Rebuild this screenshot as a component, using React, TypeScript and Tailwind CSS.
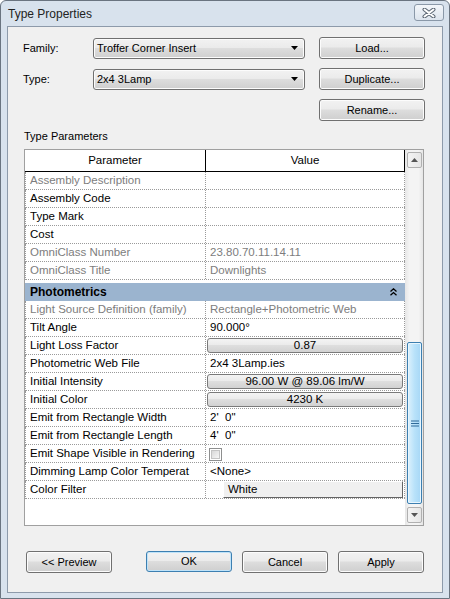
import React from "react";

const BTN =
  "border border-[#707070] rounded-[3px] bg-[linear-gradient(to_bottom,#f2f2f2_0%,#ebebeb_45%,#dddddd_50%,#cfcfcf_100%)] shadow-[inset_0_0_0_1px_#fcfcfc]";

function Combo({ text }: { text: string }) {
  return (
    <div className={`${BTN} w-[212px] h-[21px] flex items-center justify-between pl-[3px] pr-[6px]`}>
      <span className="leading-[14px]">{text}</span>
      <svg width="7" height="4" viewBox="0 0 7 4">
        <polygon points="0,0 7,0 3.5,4" fill="#000" />
      </svg>
    </div>
  );
}

function DlgButton({ text, w = "w-[106px]", primary = false }: { text: string; w?: string; primary?: boolean }) {
  return (
    <div
      className={
        primary
          ? `${w} h-[21px] flex items-center justify-center rounded-[3px] border border-[#3c7fb1] bg-[linear-gradient(to_bottom,#f2f2f2_0%,#ebebeb_45%,#dddddd_50%,#cfcfcf_100%)] shadow-[inset_0_0_0_1px_#bfe3f9]`
          : `${BTN} ${w} h-[22px] flex items-center justify-center`
      }
    >
      {text}
    </div>
  );
}

type Row = {
  p: string;
  v?: string;
  gray?: boolean;
  kind?: "text" | "button" | "check" | "color";
};

const topRows: Row[] = [
  { p: "Assembly Description", gray: true },
  { p: "Assembly Code" },
  { p: "Type Mark" },
  { p: "Cost" },
  { p: "OmniClass Number", v: "23.80.70.11.14.11", gray: true },
  { p: "OmniClass Title", v: "Downlights", gray: true },
];

const photoRows: Row[] = [
  { p: "Light Source Definition (family)", v: "Rectangle+Photometric Web", gray: true },
  { p: "Tilt Angle", v: "90.000°" },
  { p: "Light Loss Factor", v: "0.87", kind: "button" },
  { p: "Photometric Web File", v: "2x4 3Lamp.ies" },
  { p: "Initial Intensity", v: "96.00 W @ 89.06 lm/W", kind: "button" },
  { p: "Initial Color", v: "4230 K", kind: "button" },
  { p: "Emit from Rectangle Width", v: "2'\u00a0 0\"" },
  { p: "Emit from Rectangle Length", v: "4'\u00a0 0\"" },
  { p: "Emit Shape Visible in Rendering", kind: "check" },
  { p: "Dimming Lamp Color Temperat", v: "<None>" },
  { p: "Color Filter", v: "White", kind: "color" },
];

function GridRow({ r }: { r: Row }) {
  const color = r.gray ? "text-[#7d7d7d]" : "text-black";
  let value: React.ReactNode = null;
  if (r.kind === "button") {
    value = (
      <div className="w-full pl-[1px] pr-[1px] pt-[1px]">
        <div className="h-[15px] rounded-[3px] border border-[#7a7a7a] bg-[linear-gradient(to_bottom,#f4f4f4_0%,#ebebeb_45%,#dedede_50%,#d2d2d2_100%)] text-center leading-[13px] text-black">
          {r.v}
        </div>
      </div>
    );
  } else if (r.kind === "check") {
    value = (
      <div className="pl-[3px] pt-[3px]">
        <div className="w-[13px] h-[13px] border border-[#8e8f8f] bg-white p-[1px]">
          <div className="w-full h-full bg-[linear-gradient(135deg,#d8d8d8,#f6f6f6)] border border-[#c4c4c4]" />
        </div>
      </div>
    );
  } else if (r.kind === "color") {
    value = (
      <div className="flex w-full h-full pr-[1px]">
        <div className="w-[17px] h-full bg-white" />
        <div className="flex-1 h-full bg-[#f0f0f0] border-t border-l border-t-white border-l-white border-r border-b border-r-[#646464] border-b-[#646464] pl-[4px] leading-[15px] text-black">
          {r.v}
        </div>
      </div>
    );
  } else {
    value = <div className={`pl-[4px] leading-[17px] whitespace-nowrap ${color}`}>{r.v}</div>;
  }
  return (
    <div className="h-[18px] flex border-b border-l border-dotted border-[#9a9a9a]">
      <div
        className={`w-[180px] shrink-0 border-r border-dotted border-[#9a9a9a] pl-[4px] leading-[17px] whitespace-nowrap overflow-hidden ${color}`}
      >
        {r.p}
      </div>
      <div className="w-[199px] shrink-0 border-r border-dotted border-[#9a9a9a] flex">{value}</div>
    </div>
  );
}

function ScrollBtn({ up }: { up: boolean }) {
  return (
    <div className="h-[16px] w-[15px] rounded-[2px] border border-[#b0b0b0] bg-[linear-gradient(to_right,#f4f4f4,#e6e6e6)] flex items-center justify-center">
      <svg width="7" height="4" viewBox="0 0 7 4">
        {up ? (
          <polygon points="0,4 7,4 3.5,0" fill="#555" />
        ) : (
          <polygon points="0,0 7,0 3.5,4" fill="#555" />
        )}
      </svg>
    </div>
  );
}

export default function App() {
  return (
    <div className="w-[450px] h-[599px] bg-[#d8e2ed] border border-[#6a7480] rounded-t-[6px] flex flex-col overflow-hidden font-['Liberation_Sans',Arial,sans-serif] text-black">
      {/* title bar */}
      <div className="h-[25px] shrink-0 flex items-start justify-between pl-[7px] pr-[5px]">
        <div className="pt-[6px] text-[12px] leading-[14px] text-[#222]">Type Properties</div>
        <div className="mt-[3px] w-[30px] h-[17px] rounded-[3px] border border-[#8a98a8] bg-[linear-gradient(to_bottom,#f3f6fa,#dce4ed)] flex items-center justify-center">
          <svg width="14" height="10" viewBox="0 0 14 10">
            <path d="M2.5 1.5 L11.5 8.5 M11.5 1.5 L2.5 8.5" stroke="#5d6875" strokeWidth="4" strokeLinecap="round" />
            <path d="M2.5 1.5 L11.5 8.5 M11.5 1.5 L2.5 8.5" stroke="#ffffff" strokeWidth="2" strokeLinecap="round" />
          </svg>
        </div>
      </div>

      {/* client */}
      <div className="mx-[6px] mb-[5px] flex-1 border border-[#8d9aaa] bg-[#f0f0f0] flex flex-col text-[11px]">
        <div className="mt-[10px] h-[22px] flex items-center pl-[15px]">
          <div className="w-[70px]">Family:</div>
          <Combo text="Troffer Corner Insert" />
          <div className="ml-[14px]">
            <DlgButton text="Load..." />
          </div>
        </div>
        <div className="mt-[9px] h-[22px] flex items-center pl-[15px]">
          <div className="w-[70px]">Type:</div>
          <Combo text="2x4 3Lamp" />
          <div className="ml-[14px]">
            <DlgButton text="Duplicate..." />
          </div>
        </div>
        <div className="mt-[9px] h-[22px] flex items-center justify-end pr-[17px]">
          <DlgButton text="Rename..." />
        </div>

        <div className="mt-[8px] h-[14px] leading-[14px] pl-[16px]">Type Parameters</div>

        {/* grid */}
        <div className="mt-[6px] ml-[16px] w-[400px] h-[377px] border border-[#a0a0a0] bg-white flex text-[11.5px]">
          <div className="w-[380px] flex flex-col">
            <div className="h-[22px] flex border-b border-black">
              <div className="w-[181px] border-r border-black text-center leading-[21px]">Parameter</div>
              <div className="w-[199px] border-r border-black text-center leading-[21px]">Value</div>
            </div>
            {topRows.map((r) => (
              <GridRow key={r.p} r={r} />
            ))}
            <div className="h-[21px] pt-[3px]">
              <div className="h-[18px] bg-[#9bb4cf] flex items-center justify-between pl-[5px] pr-[8px] font-bold text-[12px]">
                <span>Photometrics</span>
                <svg width="7" height="8" viewBox="0 0 7 8">
                  <path d="M0.5 3.5 L3.5 0.8 L6.5 3.5 M0.5 7.2 L3.5 4.5 L6.5 7.2" stroke="#000" strokeWidth="1.3" fill="none" />
                </svg>
              </div>
            </div>
            {photoRows.map((r) => (
              <GridRow key={r.p} r={r} />
            ))}
          </div>
          {/* scrollbar */}
          <div className="w-[18px] flex flex-col pt-[2px] pb-[2px] pl-[2px] pr-[1px] bg-[linear-gradient(to_right,#e6e6e6,#f4f4f4_25%,#f4f4f4_75%,#e6e6e6)]">
            <ScrollBtn up />
            <div className="flex-1" />
            <div className="h-[162px] w-[15px] rounded-[2px] border border-[#3c7fb1] bg-[linear-gradient(to_right,#dcf1fd,#b9e2fa_50%,#a6d7f6)] shadow-[inset_0_0_0_1px_#e8f6fe] flex items-center justify-center">
              <svg width="8" height="7" viewBox="0 0 8 7">
                <path d="M0 1 H8 M0 3.5 H8 M0 6 H8" stroke="#2f6a99" strokeWidth="1" />
              </svg>
            </div>
            <div className="mt-[3px]">
              <ScrollBtn up={false} />
            </div>
          </div>
        </div>

        {/* bottom buttons */}
        <div className="mt-[25px] flex items-center pl-[18px]">
          <DlgButton text="<< Preview" w="w-[86px]" />
          <div className="ml-[34px] flex gap-[10px]">
            <DlgButton text="OK" w="w-[86px]" primary />
            <DlgButton text="Cancel" w="w-[86px]" />
            <DlgButton text="Apply" w="w-[86px]" />
          </div>
        </div>
      </div>
    </div>
  );
}
